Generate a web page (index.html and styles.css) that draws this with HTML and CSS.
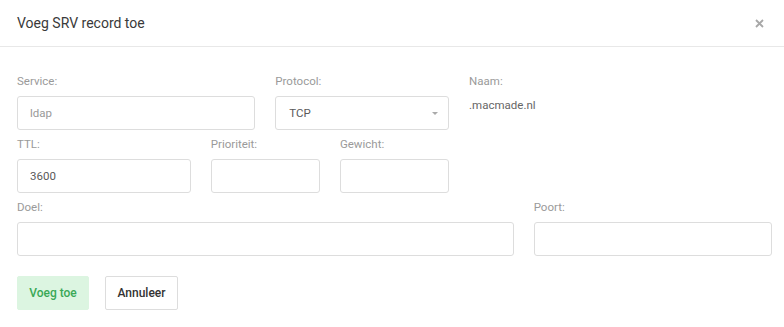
FILE: index.html
```html
<!DOCTYPE html>
<html lang="nl">
<head>
<meta charset="utf-8">
<title>Voeg SRV record toe</title>
<link rel="stylesheet" href="styles.css">
</head>
<body>
<div class="modal">
  <div class="modal-header">
    <h4 class="modal-title">Voeg SRV record toe</h4>
    <button class="close" type="button" aria-label="Sluiten">
      <svg width="9" height="9" viewBox="0 0 9 9"><path d="M1 1L8 8M8 1L1 8" stroke="#a8a8a8" stroke-width="1.8" fill="none"/></svg>
    </button>
  </div>
  <div class="modal-body">
    <div class="grid">
      <div class="field span-4">
        <label>Service:</label>
        <input class="input" type="text" placeholder="ldap">
      </div>
      <div class="field span-3">
        <label>Protocol:</label>
        <div class="select">
          <span>TCP</span>
          <span class="caret"></span>
        </div>
      </div>
      <div class="field span-5">
        <label>Naam:</label>
        <div class="static">.macmade.nl</div>
      </div>

      <div class="field span-3">
        <label>TTL:</label>
        <input class="input" type="text" value="3600">
      </div>
      <div class="field span-2">
        <label>Prioriteit:</label>
        <input class="input" type="text">
      </div>
      <div class="field span-2">
        <label>Gewicht:</label>
        <input class="input" type="text">
      </div>
      <div class="spacer span-5"></div>

      <div class="field span-8">
        <label>Doel:</label>
        <input class="input" type="text">
      </div>
      <div class="field span-4">
        <label>Poort:</label>
        <input class="input" type="text">
      </div>
    </div>
    <div class="actions">
      <button class="btn btn-success" type="button">Voeg toe</button>
      <button class="btn btn-default" type="button">Annuleer</button>
    </div>
  </div>
</div>
</body>
</html>
```

FILE: styles.css
```css
* { box-sizing: border-box; }
html, body {
  margin: 0;
  padding: 0;
  background: #fff;
  font-family: Roboto, "Liberation Sans", Arial, sans-serif;
  color: #333;
}
.modal {
  width: 784px;
}
.modal-header {
  height: 47px;
  border-bottom: 1px solid #e8e8e8;
  display: flex;
  align-items: center;
  justify-content: space-between;
  padding: 0 20px 0 17px;
}
.modal-title {
  margin: 0;
  font-size: 14px;
  font-weight: 400;
  color: #3a3a3a;
  line-height: 20px;
}
.close {
  border: 0;
  background: none;
  padding: 0;
  margin: 0;
  width: 9px;
  height: 9px;
  display: flex;
}
.modal-body {
  padding: 25px 12px 16px 17px;
}
.grid {
  display: grid;
  grid-template-columns: repeat(12, 1fr);
  column-gap: 20px;
  row-gap: 5px;
}
.span-2 { grid-column: span 2; }
.span-3 { grid-column: span 3; }
.span-4 { grid-column: span 4; }
.span-5 { grid-column: span 5; }
.span-8 { grid-column: span 8; }
.field label {
  display: block;
  font-size: 11.5px;
  line-height: 18px;
  color: #9a9a9a;
  margin-bottom: 6px;
}
.input, .select {
  display: block;
  width: 100%;
  height: 34px;
  border: 1px solid #ddd;
  border-radius: 3px;
  background: #fff;
  font-family: inherit;
  font-size: 11.5px;
  color: #5a5a5a;
  padding: 0 12px;
  margin: 0;
  outline: none;
}
.input::placeholder { color: #999; }
.select {
  display: flex;
  align-items: center;
  justify-content: space-between;
  padding: 0 10px 0 13px;
}
.caret {
  width: 0;
  height: 0;
  border-left: 3px solid transparent;
  border-right: 3px solid transparent;
  border-top: 3px solid #aaa;
}
.static {
  font-size: 11.5px;
  color: #666;
  line-height: 18px;
}
.actions {
  display: flex;
  gap: 16px;
  margin-top: 20px;
}
.btn {
  height: 34px;
  padding: 0;
  font-family: inherit;
  font-size: 12px;
  font-weight: 500;
  border-radius: 2px;
  border: 1px solid transparent;
  margin: 0;
  white-space: nowrap;
  text-align: center;
}
.btn-success {
  background: #dcf5e1;
  color: #3aa856;
  border-color: #dcf5e1;
  width: 72px;
}
.btn-default {
  background: #fff;
  color: #333;
  border-color: #ddd;
  width: 73px;
}
```
